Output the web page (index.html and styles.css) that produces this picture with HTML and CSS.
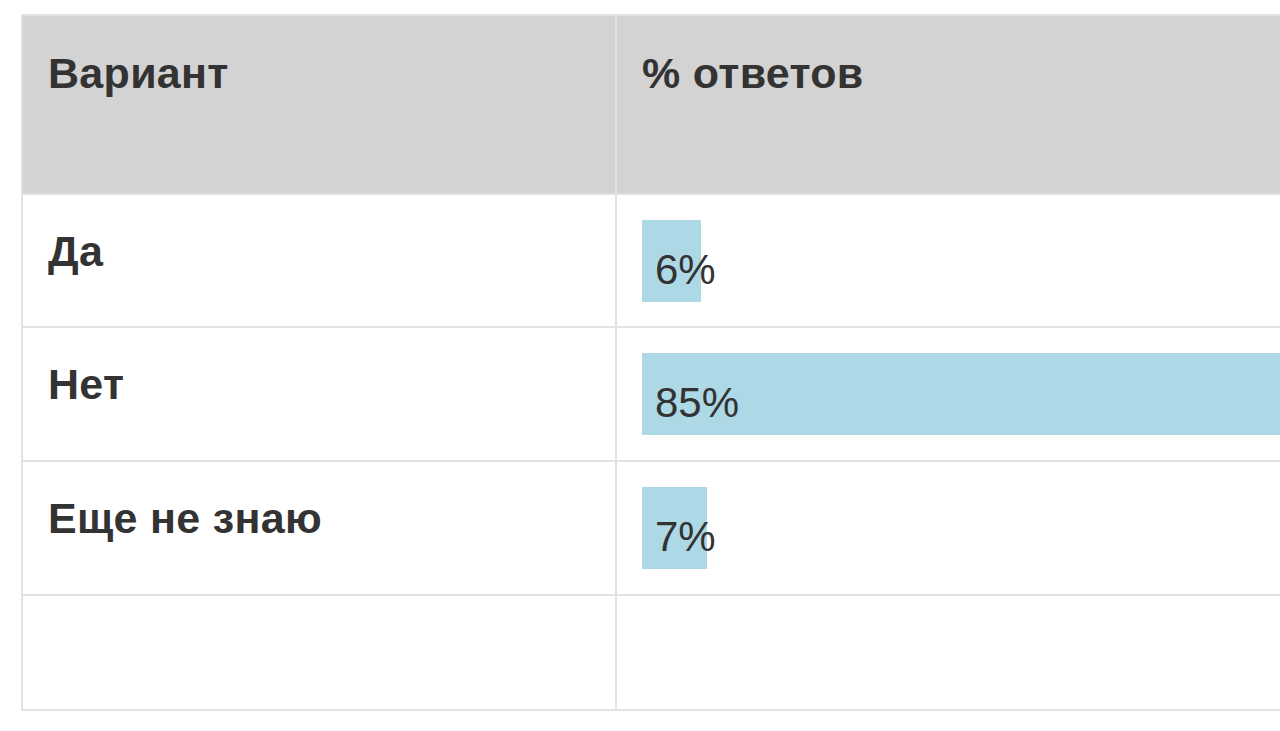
FILE: index.html
```html
<!DOCTYPE html>
<html lang="ru">
<head>
<meta charset="utf-8">
<title>Результаты опроса</title>
<link rel="stylesheet" href="styles.css">
</head>
<body>
<div class="page">
  <div class="poll" role="table">
    <div class="cell head" role="columnheader">Вариант</div>
    <div class="cell head" role="columnheader">% ответов</div>

    <div class="cell label" role="cell">Да</div>
    <div class="cell value" role="cell"><div class="bar" style="width:6.15%">6%</div></div>

    <div class="cell label" role="cell">Нет</div>
    <div class="cell value" role="cell"><div class="bar" style="width:85%">85%</div></div>

    <div class="cell label" role="cell">Еще не знаю</div>
    <div class="cell value" role="cell"><div class="bar" style="width:6.77%">7%</div></div>

    <div class="cell label" role="cell"></div>
    <div class="cell value" role="cell"></div>
  </div>
</div>
</body>
</html>
```

FILE: styles.css
```css
html, body {
  margin: 0;
  padding: 0;
  background: #ffffff;
  overflow: hidden;
}

body {
  font-family: "Liberation Sans", Arial, sans-serif;
  font-size: 42px;
  color: #333333;
}

.page {
  padding: 14px 0 0 21px;
}

.poll {
  display: grid;
  grid-template-columns: 594px 1012px;
  grid-template-rows: 179px 133px 134px 134px 115px;
  width: 1608px;
  border-top: 2px solid #e2e2e2;
  border-left: 2px solid #e2e2e2;
}

.cell {
  box-sizing: border-box;
  border-right: 2px solid #e2e2e2;
  border-bottom: 2px solid #e2e2e2;
  padding: 32px 25px 0 25px;
  white-space: nowrap;
}

.head {
  background: #d3d3d3;
  font-weight: bold;
  font-size: 43px;
  letter-spacing: 0.3px;
  padding-top: 33px;
}

.label {
  font-weight: bold;
  font-size: 43px;
  letter-spacing: 0.3px;
}

.value {
  padding-top: 25px;
}

.bar {
  box-sizing: border-box;
  height: 82px;
  padding: 26px 0 0 13px;
  background: #add8e6;
  white-space: nowrap;
  overflow: visible;
}
```
